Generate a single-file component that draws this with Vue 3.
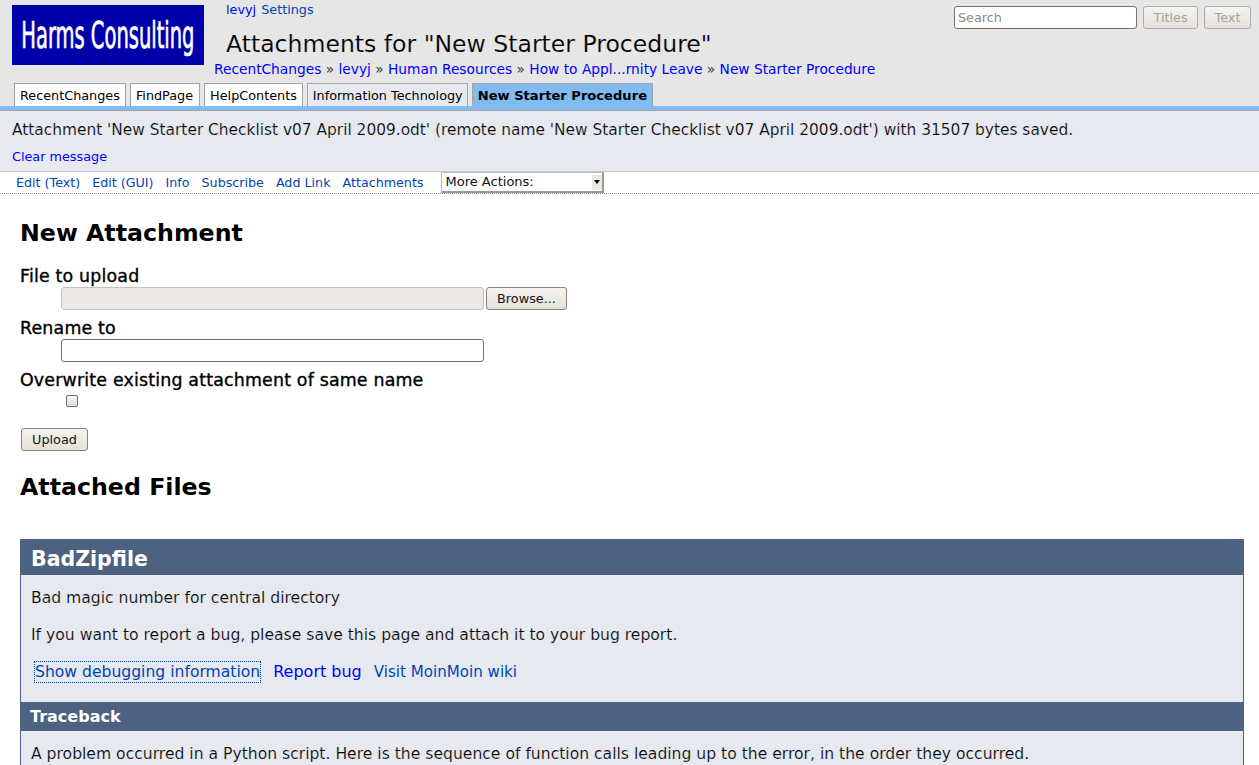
<template>
  <div class="page">
    <header class="header">
      <div class="top">
        <a class="logo"><span class="logo-text">Harms Consulting</span></a>
        <div class="head-main">
          <ul class="username">
            <li><a class="pure">levyj</a></li>
            <li><a>Settings</a></li>
          </ul>
          <h1 class="title">Attachments for "New Starter Procedure"</h1>
          <div class="pagetrail">
            <template v-for="(crumb, i) in crumbs" :key="crumb">
              <span v-if="i" class="sep"> » </span><a class="pure">{{ crumb }}</a>
            </template>
          </div>
        </div>
        <form class="searchform" @submit.prevent>
          <input class="search" type="text" placeholder="Search" />
          <button class="btn dim titles" type="button">Titles</button>
          <button class="btn dim text" type="button">Text</button>
        </form>
      </div>
      <ul class="tabs">
        <li v-for="tab in tabs" :key="tab.name" class="tab" :class="tab.kind">{{ tab.name }}</li>
      </ul>
    </header>

    <div class="message">
      <p class="msg-text">Attachment 'New Starter Checklist v07 April 2009.odt' (remote name 'New Starter Checklist v07 April 2009.odt') with 31507 bytes saved.</p>
      <a class="pure clear">Clear message</a>
    </div>

    <nav class="editbar">
      <a v-for="item in actions" :key="item">{{ item }}</a>
      <div class="more">
        <span>More Actions:</span>
        <span class="more-arrow"></span>
      </div>
    </nav>

    <main class="content">
      <h2 class="section first">New Attachment</h2>
      <form class="upload" @submit.prevent>
        <div class="label">File to upload</div>
        <div class="field">
          <input class="file-box" type="text" disabled />
          <button class="btn browse" type="button">Browse...</button>
        </div>
        <div class="label">Rename to</div>
        <div class="field">
          <input class="rename-box" type="text" />
        </div>
        <div class="label">Overwrite existing attachment of same name</div>
        <div class="field check">
          <input class="checkbox" type="checkbox" />
        </div>
        <button class="btn upload-btn" type="button">Upload</button>
      </form>
      <h2 class="section second">Attached Files</h2>

      <section class="error">
        <h1 class="error-title">BadZipfile</h1>
        <div class="error-body">
          <p>Bad magic number for central directory</p>
          <p>If you want to report a bug, please save this page and attach it to your bug report.</p>
          <p class="error-links">
            <a class="focused">Show debugging information</a>
            <a class="pure">Report bug</a>
            <a class="visit">Visit MoinMoin wiki</a>
          </p>
        </div>
        <h2 class="error-sub">Traceback</h2>
        <div class="error-body">
          <p>A problem occurred in a Python script. Here is the sequence of function calls leading up to the error, in the order they occurred.</p>
        </div>
      </section>
    </main>
  </div>
</template>

<script setup>
const crumbs = ['RecentChanges', 'levyj', 'Human Resources', 'How to Appl...rnity Leave', 'New Starter Procedure']

const tabs = [
  { name: 'RecentChanges', kind: 'wiki' },
  { name: 'FindPage', kind: 'wiki' },
  { name: 'HelpContents', kind: 'wiki' },
  { name: 'Information Technology', kind: 'user' },
  { name: 'New Starter Procedure', kind: 'current' },
]

const actions = ['Edit (Text)', 'Edit (GUI)', 'Info', 'Subscribe', 'Add Link', 'Attachments']
</script>

<style scoped>
.page {
  height: 765px;
  overflow: hidden;
  background: #fff;
  color: #000;
  font-family: "DejaVu Sans", sans-serif;
  font-size: 14.4px;
}

a {
  color: #0044b3;
  text-decoration: none;
}

a.pure {
  color: #0000ff;
}

ul {
  list-style: none;
  margin: 0;
  padding: 0;
}

/* header */
.header {
  background: #e6e6e6;
  height: 106px;
  padding: 0 8px 0 12px;
  box-sizing: border-box;
}

.top {
  display: flex;
  height: 83px;
}

.logo {
  flex: none;
  width: 192px;
  height: 60px;
  margin-top: 5px;
  margin-right: 10px;
  background: #0000aa;
  display: flex;
  align-items: center;
  justify-content: center;
  overflow: hidden;
}

.logo-text {
  color: #fff;
  font-family: "DejaVu Sans Condensed", "DejaVu Sans", sans-serif;
  font-size: 38px;
  -webkit-text-stroke: 0.7px #fff;
  white-space: nowrap;
  display: inline-block;
  transform: scaleX(0.57);
}

.head-main {
  flex: 1;
  min-width: 0;
}

.username {
  display: flex;
  gap: 5px;
  padding: 2px 0 0 12px;
  font-size: 12.8px;
  line-height: 15px;
}

.title {
  margin: 12px 0 0 12px;
  font-size: 23.55px;
  font-weight: normal;
  line-height: 30px;
  -webkit-text-stroke: 0.15px #e6e6e6;
}

.pagetrail {
  margin-top: 1px;
  font-size: 13.75px;
  line-height: 18px;
  white-space: nowrap;
}

.sep {
  color: #333;
}

.searchform {
  flex: none;
  display: flex;
  align-items: flex-start;
  gap: 6px;
  margin-top: 6px;
}

.search {
  width: 183px;
  height: 23px;
  box-sizing: border-box;
  border: 1px solid #7f6f60;
  border-radius: 3px;
  background: #fff;
  padding: 0 3px;
  font: 12.8px "DejaVu Sans", sans-serif;
  outline: none;
}

.search::placeholder {
  color: #8a8a8a;
  opacity: 1;
}

.btn {
  box-sizing: border-box;
  height: 23px;
  border: 1px solid #8b8276;
  border-radius: 3px;
  background: linear-gradient(#f6f4f1, #e4e0da);
  color: #111;
  font: 12.8px "DejaVu Sans", sans-serif;
  padding: 0;
}

.btn.dim {
  color: #a8a49c;
  border-color: #b3aa9d;
}

.titles {
  width: 55px;
}

.text {
  width: 47px;
}

.tabs {
  display: flex;
  gap: 4px;
  margin-left: 2px;
  height: 23px;
}

.tab {
  box-sizing: border-box;
  height: 23px;
  padding: 0 5px;
  border: 1px solid #a3a3a3;
  border-bottom: 0;
  font-size: 12.8px;
  line-height: 24px;
  white-space: nowrap;
}

.tab:nth-child(2) {
  padding-right: 6px;
}

.tab:nth-child(4) {
  padding-right: 4px;
}

.tab.wiki {
  background: #fff;
}

.tab.user {
  background: #e6eaf0;
}

.tab.current {
  background: #81bbf2;
  font-weight: bold;
  font-size: 13.1px;
}

/* message */
.message {
  background: #e6eaf0;
  border-top: 4px solid #81bbf2;
  box-shadow: inset 0 1px 0 #a3a3a3;
  border-bottom: 1px solid #c8c8c8;
  height: 61px;
  padding: 0 12px;
}

.msg-text {
  margin: 0;
  padding-top: 11px;
  font-size: 15.4px;
  line-height: 19px;
  -webkit-text-stroke: 0.18px #e6eaf0;
}

.clear {
  display: block;
  margin-top: 9px;
  font-size: 12.8px;
  line-height: 16px;
}

/* edit bar */
.editbar {
  display: flex;
  align-items: center;
  height: 21px;
  padding-left: 16px;
  border-bottom: 1px dotted #8a8a8a;
  font-size: 12.7px;
  gap: 12px;
}

.more {
  position: relative;
  box-sizing: border-box;
  width: 163px;
  height: 21px;
  margin-left: 5px;
  border: 1px solid #b4bccb;
  border-right: 2px solid #9a9a9a;
  border-bottom: 2px solid #9a9a9a;
  background: #fff;
  padding-left: 4px;
  font-size: 13px;
  line-height: 18px;
  color: #111;
}

.more-arrow {
  position: absolute;
  top: 1px;
  right: 0;
  width: 11px;
  height: 16px;
  background: #ece9e4;
  box-shadow: inset 1px 1px 0 #fff;
}

.more-arrow::after {
  content: "";
  position: absolute;
  left: 3px;
  top: 6px;
  border: 3px solid transparent;
  border-top: 4px solid #000;
  border-bottom: 0;
}

/* content */
.content {
  padding: 0 15px 0 20px;
}

.section {
  margin: 0;
  font-size: 23.7px;
  font-weight: bold;
  line-height: 30px;
}

.section.first {
  padding-top: 24px;
}

.section.second {
  margin-top: 21px;
}

.upload {
  margin-top: 19px;
}

.label {
  font-size: 17.4px;
  letter-spacing: 0.18px;
  font-weight: normal;
  -webkit-text-stroke: 0.35px #000;
  line-height: 19px;
}

.field {
  display: flex;
  align-items: center;
  gap: 2px;
  height: 24px;
  margin: 0 0 9px 41px;
}

.file-box,
.rename-box {
  box-sizing: border-box;
  width: 423px;
  height: 23px;
  border-radius: 3px;
  outline: none;
}

.file-box {
  border: 1px solid #c9c1b5;
  background: #ebe7e3;
}

.rename-box {
  border: 1px solid #7f6f60;
  background: #fff;
}

.browse {
  width: 81px;
}

.check {
  height: 22px;
  margin-bottom: 0;
  padding-left: 5px;
}

.checkbox {
  appearance: none;
  box-sizing: border-box;
  width: 12px;
  height: 12px;
  margin: 0;
  border: 1px solid #6e6e6e;
  border-radius: 2px;
  background: linear-gradient(#f6f6f6, #dedcd8);
}

.upload-btn {
  display: block;
  width: 67px;
  margin: 16px 0 0 1px;
}

/* error box */
.error {
  margin-top: 37px;
  box-sizing: border-box;
  width: 1224px;
  min-height: 240px;
  border: 1px solid #4d6180;
  border-bottom: 0;
  background: #e6eaf0;
}

.error-title {
  margin: 0;
  background: #4d6180;
  color: #fff;
  height: 35px;
  padding-left: 10px;
  font-size: 20.5px;
  font-weight: bold;
  line-height: 38px;
}

.error-body {
  padding: 0 10px;
}

.error-body p {
  margin: 0;
  padding-top: 10px;
  line-height: 27px;
  font-size: 15.6px;
  -webkit-text-stroke: 0.18px #e6eaf0;
}

.error-body p.error-links {
  display: flex;
  gap: 12px;
  padding-left: 3px;
  padding-top: 12px;
  height: 41px;
  line-height: 22px;
  -webkit-text-stroke: 0;
}

.error-links .pure {
  font-size: 16px;
}

.error-links .visit {
  font-size: 15.1px;
}

.focused {
  outline: 1px dotted #0044b3;
  outline-offset: -1px;
  height: 22px;
  padding: 0 1px;
}

.error-sub {
  margin: 0;
  background: #4d6180;
  color: #fff;
  height: 29px;
  padding-left: 9px;
  font-size: 16px;
  font-weight: bold;
  line-height: 29px;
}
</style>

<style>
html,
body {
  margin: 0;
  overflow: hidden;
}
</style>
